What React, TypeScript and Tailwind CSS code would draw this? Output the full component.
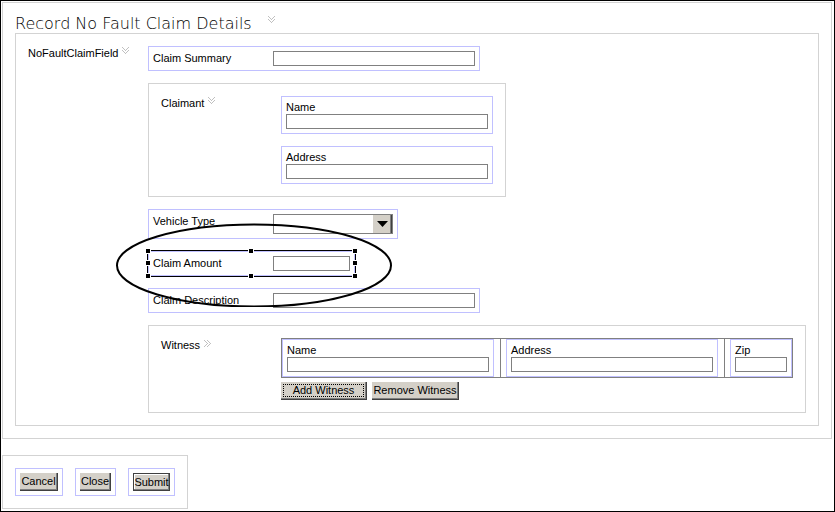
import React, { useId } from "react";
import clsx from "clsx";

const HANDLES = [
  "-top-px -left-px",
  "-top-px left-1/2 -translate-x-1/2",
  "-top-px -right-px",
  "top-1/2 -left-px -translate-y-1/2",
  "top-1/2 -right-px -translate-y-1/2",
  "-bottom-px -left-px",
  "-bottom-px left-1/2 -translate-x-1/2",
  "-bottom-px -right-px",
];

// double chevron, one [x, y] per pixel
const CHEVRON = [
  [0, 0], [6, 0],
  [1, 1], [5, 1],
  [2, 2], [4, 2],
  [3, 3],
  [0, 3], [6, 3],
  [1, 4], [5, 4],
  [2, 5], [4, 5],
  [3, 6],
];

function Chevron({ collapsed }: { collapsed?: boolean }) {
  return (
    <svg
      viewBox="0 0 8 8"
      shapeRendering="crispEdges"
      className={clsx("w-2 h-2 mt-px shrink-0 fill-[#c0c0c0]", collapsed && "-rotate-90")}
      aria-hidden="true"
    >
      {CHEVRON.map(([x, y]) => (
        <rect key={`${x}-${y}`} x={x} y={y} width="1" height="1" />
      ))}
    </svg>
  );
}

function SectionLabel({ children, collapsed }: { children: string; collapsed?: boolean }) {
  return (
    <div className="w-[120px] shrink-0 flex items-start gap-1 leading-[15px]">
      <span>{children}</span>
      <Chevron collapsed={collapsed} />
    </div>
  );
}

interface FieldProps {
  label: string;
  width?: string;
  stacked?: boolean;
}

function Field({ label, width = "w-[202px]", stacked }: FieldProps) {
  const id = useId();
  return (
    <div className={clsx("w-fit border border-[#c0c0ff] p-1", !stacked && "flex")}>
      <label
        htmlFor={id}
        className={stacked ? "block leading-[13px]" : "w-[120px] shrink-0 leading-[15px]"}
      >
        {label}
      </label>
      <input
        id={id}
        type="text"
        className={clsx("block h-[15px] border border-[#808080] bg-white px-1 outline-none", width)}
      />
    </div>
  );
}

function VehicleType() {
  return (
    <div className="w-fit flex border border-[#c0c0ff] p-1">
      <label htmlFor="vehicle" className="w-[120px] shrink-0 leading-[15px]">
        Vehicle Type
      </label>
      <div className="relative w-[120px] h-5">
        <select
          id="vehicle"
          className="block w-full h-full appearance-none border border-[#808080] bg-white px-1 outline-none"
        />
        <span className="absolute inset-y-px right-px w-[19px] flex items-center justify-center border-r border-[#404040] bg-[#d4d0c8] shadow-[inset_-1px_0_0_#808080] pointer-events-none">
          <svg viewBox="0 0 11 6" className="w-[11px] h-[6px]" aria-hidden="true">
            <path d="M0 0H11L5.5 6Z" />
          </svg>
        </span>
      </div>
    </div>
  );
}

function Selected({ children }: { children: React.ReactNode }) {
  return (
    <div className="relative w-fit">
      {children}
      <div className="absolute -inset-px border border-black pointer-events-none">
        {HANDLES.map((pos) => (
          <span key={pos} className={clsx("absolute -m-px w-1 h-1 bg-black ring-1 ring-white", pos)} />
        ))}
      </div>
      <svg
        viewBox="0 0 276 84"
        className="absolute -left-8 -top-7 z-10 w-[276px] h-[84px] max-w-none pointer-events-none"
        aria-hidden="true"
      >
        <ellipse cx="138" cy="42.5" rx="137" ry="41" fill="none" stroke="black" strokeWidth="2" />
      </svg>
    </div>
  );
}

interface BevelButtonProps {
  children: string;
  className: string;
  isDefault?: boolean;
  focused?: boolean;
}

function BevelButton({ children, className, isDefault, focused }: BevelButtonProps) {
  return (
    <button
      type="button"
      className={clsx(
        "relative h-[18px] bg-[#d4d0c8] border-[#404040] whitespace-nowrap",
        isDefault
          ? "border leading-[16px] shadow-[inset_-1px_-1px_0_#808080,inset_1px_1px_0_#ffffff]"
          : "border-r border-b leading-[17px] shadow-[inset_-1px_-1px_0_#808080]",
        className
      )}
    >
      {children}
      {focused && <span className="absolute inset-0.5 border border-dotted border-black" />}
    </button>
  );
}

export default function App() {
  return (
    <main className="min-h-screen bg-white border border-black pt-px pl-px pr-0.5 pb-0.5 font-['Liberation_Sans',Arial,sans-serif] text-[11px] text-black">
      <section className="border border-[#d3d3d3] px-3 pt-3 pb-3">
        <div className="flex items-start gap-4">
          <h1 className="font-['DejaVu_Sans',Verdana,sans-serif] font-extralight text-[16px] leading-[18px]">
            Record No Fault Claim Details
          </h1>
          <Chevron />
        </div>

        <div className="flex border border-[#d3d3d3] p-3">
          <SectionLabel>NoFaultClaimField</SectionLabel>
          <div className="flex-1 flex flex-col gap-3">
            <Field label="Claim Summary" />

            <div className="w-[358px] flex border border-[#d3d3d3] p-3">
              <SectionLabel>Claimant</SectionLabel>
              <div className="flex flex-col gap-3">
                <Field label="Name" stacked />
                <Field label="Address" stacked />
              </div>
            </div>

            <VehicleType />
            <Selected>
              <Field label="Claim Amount" width="w-[77px]" />
            </Selected>
            <Field label="Claim Description" />

            <div className="flex border border-[#d3d3d3] p-3">
              <SectionLabel collapsed>Witness</SectionLabel>
              <div className="flex flex-col items-start gap-1">
                <div className="flex border border-[#808080]">
                  <div className="pr-1.5">
                    <Field label="Name" stacked />
                  </div>
                  <div className="border-l border-[#808080] pl-[5px] pr-1.5">
                    <Field label="Address" stacked />
                  </div>
                  <div className="border-l border-[#808080] pl-[5px]">
                    <Field label="Zip" width="w-[52px]" stacked />
                  </div>
                </div>
                <div className="flex gap-[5px]">
                  <BevelButton className="w-[86px]" focused>Add Witness</BevelButton>
                  <BevelButton className="w-[87px]">Remove Witness</BevelButton>
                </div>
              </div>
            </div>
          </div>
        </div>
      </section>

      <section className="mt-4 w-fit flex gap-3 border border-[#d3d3d3] p-3">
        <div className="flex border border-[#c0c0ff] p-1">
          <BevelButton className="w-[38px]">Cancel</BevelButton>
        </div>
        <div className="flex border border-[#c0c0ff] p-1">
          <BevelButton className="w-[31px]">Close</BevelButton>
        </div>
        <div className="flex border border-[#c0c0ff] p-1">
          <BevelButton className="w-[37px]" isDefault>Submit</BevelButton>
        </div>
      </section>
    </main>
  );
}
